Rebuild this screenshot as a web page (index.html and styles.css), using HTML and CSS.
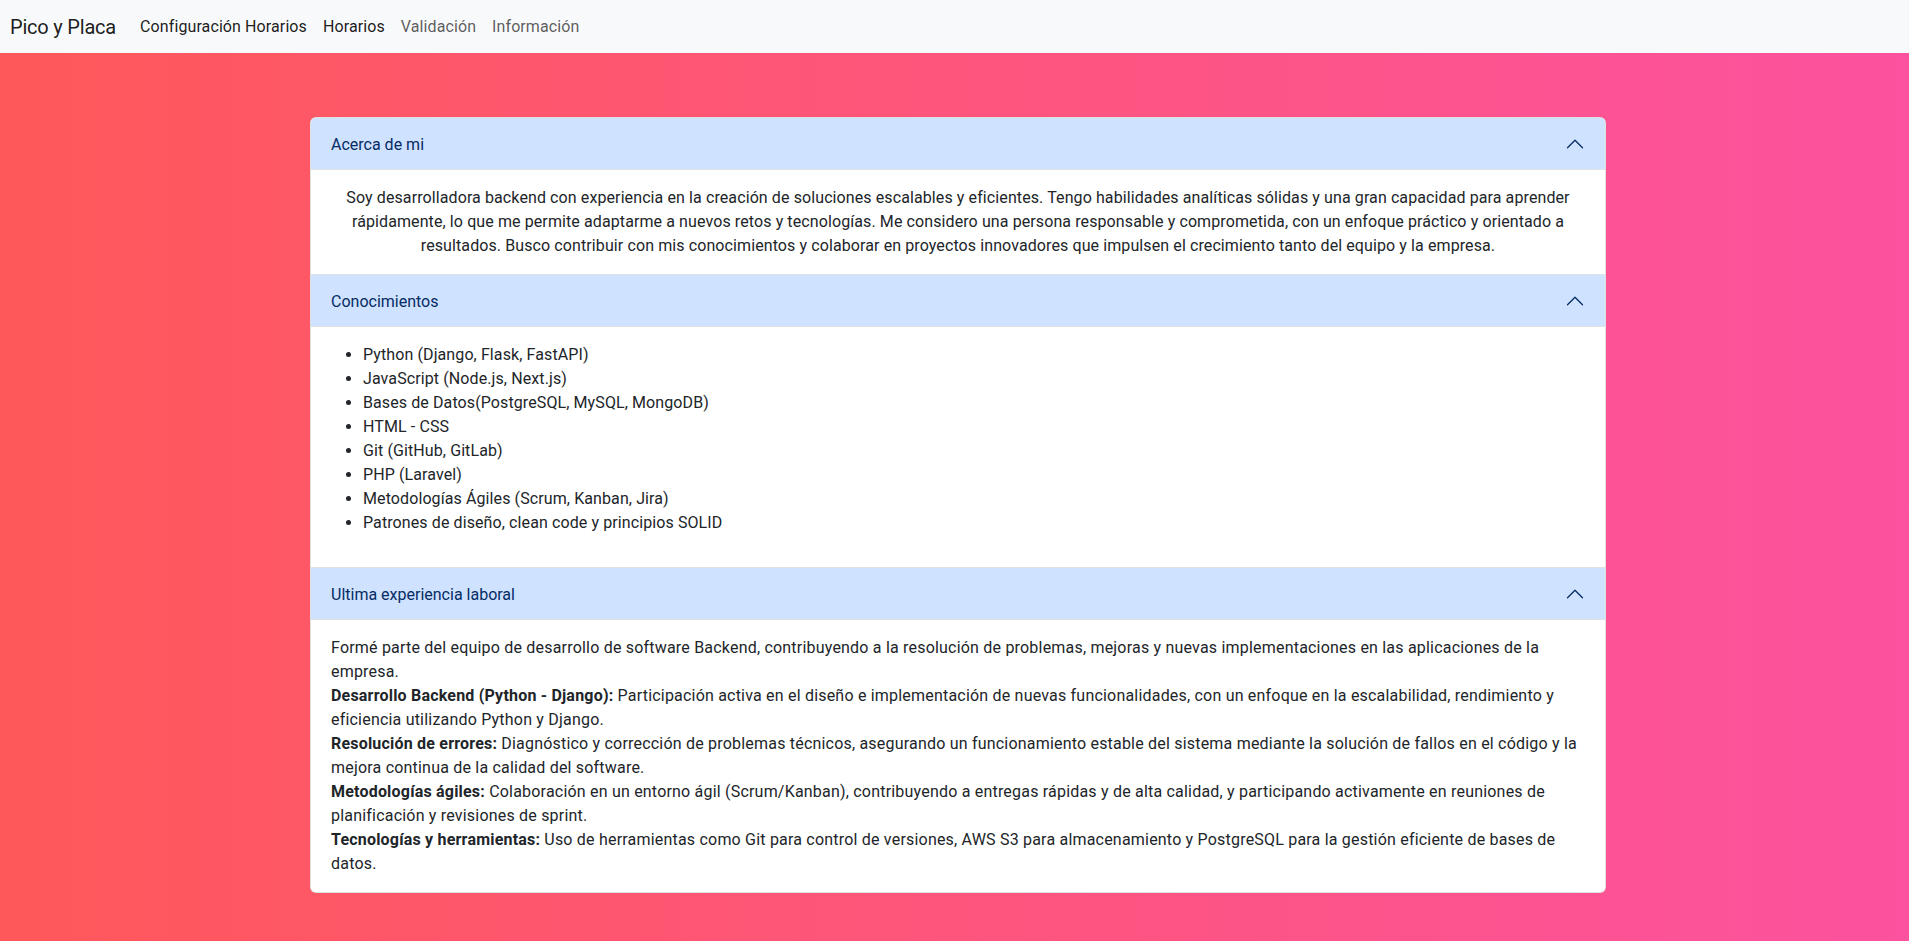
FILE: index.html
```html
<!DOCTYPE html>
<html lang="es">
<head>
<meta charset="utf-8">
<title>Pico y Placa</title>
<link rel="stylesheet" href="styles.css">
</head>
<body>
<nav class="navbar">
  <a class="brand" href="#">Pico y Placa</a>
  <ul class="nav">
    <li><a class="nav-link active" href="#">Configuración Horarios</a></li>
    <li><a class="nav-link active" href="#">Horarios</a></li>
    <li><a class="nav-link" href="#">Validación</a></li>
    <li><a class="nav-link" href="#">Información</a></li>
  </ul>
</nav>
<main class="page">
  <div class="accordion">
    <section class="acc-item">
      <div class="acc-header">
        <span>Acerca de mi</span>
        <svg class="chev" viewBox="0 0 16 16" fill="none" stroke="#052c65" stroke-width="1" stroke-linecap="round" stroke-linejoin="round"><path d="M2 11L8 5L14 11"/></svg>
      </div>
      <div class="acc-body center">
        Soy desarrolladora backend con experiencia en la creación de soluciones escalables y eficientes. Tengo habilidades analíticas sólidas y una gran capacidad para aprender rápidamente, lo que me permite adaptarme a nuevos retos y tecnologías. Me considero una persona responsable y comprometida, con un enfoque práctico y orientado a resultados. Busco contribuir con mis conocimientos y colaborar en proyectos innovadores que impulsen el crecimiento tanto del equipo y la empresa.
      </div>
    </section>
    <section class="acc-item">
      <div class="acc-header">
        <span>Conocimientos</span>
        <svg class="chev" viewBox="0 0 16 16" fill="none" stroke="#052c65" stroke-width="1" stroke-linecap="round" stroke-linejoin="round"><path d="M2 11L8 5L14 11"/></svg>
      </div>
      <div class="acc-body">
        <ul class="skills">
          <li>Python (Django, Flask, FastAPI)</li>
          <li>JavaScript (Node.js, Next.js)</li>
          <li>Bases de Datos(PostgreSQL, MySQL, MongoDB)</li>
          <li>HTML - CSS</li>
          <li>Git (GitHub, GitLab)</li>
          <li>PHP (Laravel)</li>
          <li>Metodologías Ágiles (Scrum, Kanban, Jira)</li>
          <li>Patrones de diseño, clean code y principios SOLID</li>
        </ul>
      </div>
    </section>
    <section class="acc-item">
      <div class="acc-header">
        <span>Ultima experiencia laboral</span>
        <svg class="chev" viewBox="0 0 16 16" fill="none" stroke="#052c65" stroke-width="1" stroke-linecap="round" stroke-linejoin="round"><path d="M2 11L8 5L14 11"/></svg>
      </div>
      <div class="acc-body exp">
        <p>Formé parte del equipo de desarrollo de software Backend, contribuyendo a la resolución de problemas, mejoras y nuevas implementaciones en las aplicaciones de la empresa.</p>
        <p><b>Desarrollo Backend (Python - Django):</b> Participación activa en el diseño e implementación de nuevas funcionalidades, con un enfoque en la escalabilidad, rendimiento y eficiencia utilizando Python y Django.</p>
        <p><b>Resolución de errores:</b> Diagnóstico y corrección de problemas técnicos, asegurando un funcionamiento estable del sistema mediante la solución de fallos en el código y la mejora continua de la calidad del software.</p>
        <p><b>Metodologías ágiles:</b> Colaboración en un entorno ágil (Scrum/Kanban), contribuyendo a entregas rápidas y de alta calidad, y participando activamente en reuniones de planificación y revisiones de sprint.</p>
        <p><b>Tecnologías y herramientas:</b> Uso de herramientas como Git para control de versiones, AWS S3 para almacenamiento y PostgreSQL para la gestión eficiente de bases de datos.</p>
      </div>
    </section>
  </div>
</main>
</body>
</html>
```
FILE: styles.css
```css
* { box-sizing: border-box; }
html, body {
  margin: 0;
  min-height: 100vh;
}
body {
  font-family: Roboto, "Liberation Sans", sans-serif;
  font-size: 16px;
  line-height: 24px;
  color: #212529;
  background: linear-gradient(90deg, #ff585a 0%, #fc529f 100%);
}
.navbar {
  height: 53px;
  background: #f8f9fa;
  display: flex;
  align-items: center;
  padding: 0 12px 0 10px;
}
.brand {
  font-size: 20px;
  letter-spacing: -0.2px;
  color: rgba(0,0,0,0.9);
  text-decoration: none;
  margin-right: 16px;
}
.nav {
  list-style: none;
  display: flex;
  margin: 0;
  padding: 0;
}
.nav-link {
  display: block;
  padding: 8px;
  letter-spacing: 0.1px;
  color: rgba(0,0,0,0.65);
  text-decoration: none;
}
.nav-link.active { color: rgba(0,0,0,0.9); }
.page {
  display: flex;
  justify-content: center;
  padding: 64px 0 49px 7px;
}
.accordion {
  width: 1296px;
  background: #fff;
  border-radius: 6px;
  overflow: hidden;
  border: 1px solid rgba(0,0,0,0.12);
}
.acc-item + .acc-item { border-top: 1px solid #dee2e6; }
.acc-header {
  display: flex;
  align-items: center;
  justify-content: space-between;
  padding: 16px 20px;
  line-height: 19px;
  background: #cfe2ff;
  color: #052c65;
  box-shadow: inset 0 -1px 0 #dee2e6;
}
.chev { width: 20px; height: 20px; }
.acc-body {
  padding: 16px 20px;
  letter-spacing: 0.1px;
}
.acc-body.center { text-align: center; }
.acc-body.exp { letter-spacing: 0.2px; }
.skills {
  margin: 0 0 16px;
  padding-left: 32px;
}
.acc-body p { margin: 0; }
```
